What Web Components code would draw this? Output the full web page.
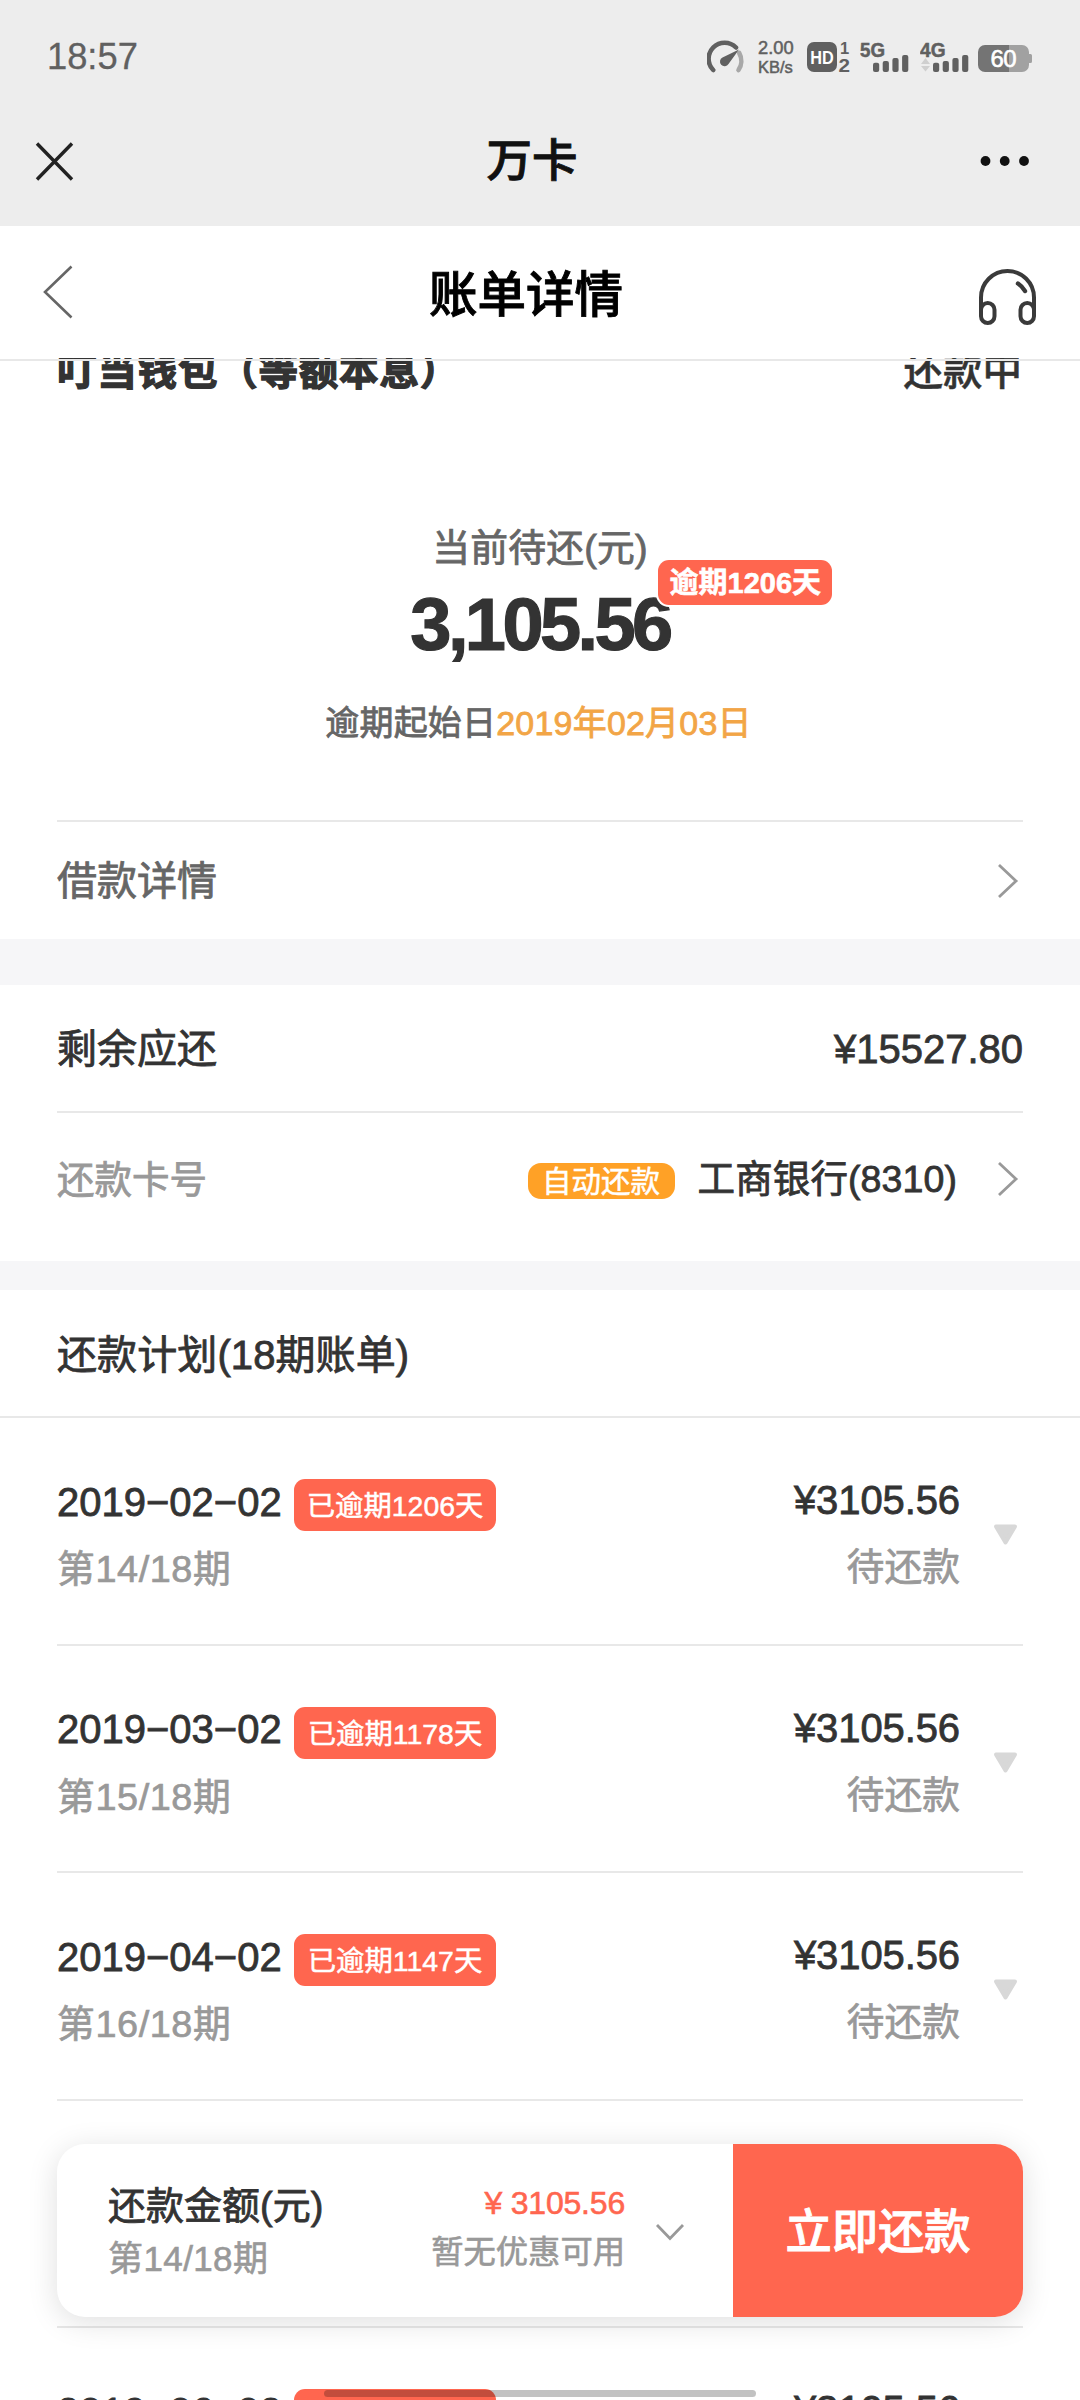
<!DOCTYPE html>
<html lang="zh-CN">
<head>
<meta charset="utf-8">
<title>账单详情</title>
<style>
html,body{margin:0;padding:0;background:#fff}
body{width:1080px;height:2400px;overflow:hidden;font-family:"Liberation Sans","Noto Sans CJK SC",sans-serif;color:#333}
</style>
</head>
<body>
<bill-app></bill-app>
<script>
const define=(name,css,html)=>{
  const tpl=document.createElement('template');
  tpl.innerHTML=`<style>*{box-sizing:border-box}${css}</style>${html}`;
  customElements.define(name,class extends HTMLElement{
    constructor(){
      super();
      this.attachShadow({mode:'open'}).append(tpl.content.cloneNode(true));
    }
  });
};
const bars=x=>[[0,62.7],[9.7,61],[19.4,58],[29.1,55]].map(([d,y])=>`<rect x="${x+d}" y="${y-36}" width="6.2" height="${72-y}" rx="2"/>`).join('');

define('status-bar',`
:host{display:flex;height:90px;padding:24px 47px 0 47px;justify-content:space-between;color:#606060}
time{font-size:36.3px;line-height:66px;-webkit-text-stroke:.3px}
.r{display:flex;height:48px;padding-top:12px}
.net{display:flex;flex-direction:column;width:35px;margin-left:14px;font-size:18.300px;line-height:19px;-webkit-text-stroke:.5px;white-space:nowrap;margin-top:2px}
.net b{font-weight:400;font-size:16.500px;line-height:20px}
svg{display:block;flex:none}
.hd{margin-left:14px}.s{margin-left:10px}.bat{margin-left:8px}
svg text{font-family:"Liberation Sans",sans-serif}
`,`
<time>18:57</time>
<div class="r">
<svg width="37" height="40" viewBox="0 0 37 40"><path d="M6.200 34A15.700 15.700 0 0 1 29 11.500" fill="none" stroke="#606060" stroke-width="4.600" stroke-linecap="round"/><path d="M32.200 17A16 16 0 0 1 31.500 34" fill="none" stroke="#a8a8a8" stroke-width="4.600" stroke-linecap="round"/><path d="M32 13.500L21.500 28A4.600 4.600 0 1 1 15.500 21.500Z" fill="#606060"/></svg>
<div class="net"><span>2.00</span><b>KB/s</b></div>
<svg class="hd" width="43" height="42" viewBox="0 0 43 42"><rect x="0" y="6" width="30" height="30" rx="7" fill="#606060"/><text x="3.300" y="28" font-size="19" font-weight="700" fill="#fff" textLength="23.500" lengthAdjust="spacingAndGlyphs">HD</text><text x="33" y="17.700" font-size="16.500" font-weight="700" fill="#606060">1</text><text x="31.500" y="36.300" font-size="18" font-weight="700" fill="#606060" textLength="11.500" lengthAdjust="spacingAndGlyphs">2</text></svg>
<svg class="s" width="50" height="42" viewBox="0 0 50 42" fill="#606060"><text x="0" y="20.500" font-size="20" font-weight="700" textLength="25" lengthAdjust="spacingAndGlyphs" stroke="#606060" stroke-width=".5">5G</text>${bars(13)}</svg>
<svg class="s" width="50" height="42" viewBox="0 0 50 42" fill="#606060"><text x="0" y="20.500" font-size="20" font-weight="700" textLength="25.500" lengthAdjust="spacingAndGlyphs" stroke="#606060" stroke-width=".5">4G</text><path d="M1 28L5.500 22L10 28ZM1 30L5.500 35.500L10 30Z" fill="#cfcfcf"/>${bars(13)}</svg>
<svg class="bat" width="55" height="42" viewBox="0 0 55 42"><path d="M7 9H31V36H7a7 7 0 0 1-7-7V16a7 7 0 0 1 7-7Z" fill="#747474"/><path d="M31 9H44a7 7 0 0 1 7 7V18h1.500q1.500 0 1.500 1.500V25.500q0 1.500-1.500 1.500H51V29a7 7 0 0 1-7 7H31Z" fill="#a1a1a1"/><text x="12.500" y="30.500" font-size="24" fill="#fff" stroke="#fff" stroke-width=".6" textLength="26">60</text></svg>
</div>`);

define('app-nav',`
:host{display:flex;height:136px;padding:0 50px 0 34px;align-items:center;justify-content:space-between}
h1{margin:8px 0 0 8px;font-size:45.500px;line-height:66px;font-weight:500;color:#111;-webkit-text-stroke:.9px}
svg{display:block;margin-top:6px}`,`
<svg width="42" height="42" viewBox="0 0 42 42" style="margin-top:8px"><path d="M3 2.500L38 38.500M38 2.500L3 38.500" stroke="#222" stroke-width="3.400"/></svg>
<h1>万卡</h1>
<svg width="50" height="12" viewBox="0 0 50 12" fill="#111"><circle cx="5.500" cy="6" r="4.900"/><circle cx="24.700" cy="6" r="4.900"/><circle cx="44" cy="6" r="4.900"/></svg>`);

define('page-header',`
:host{display:flex;height:132px;flex:none;padding:0 42px;align-items:center;justify-content:space-between;background:#fff}
h2{margin:5px 0 0 0;font-size:48.500px;line-height:70px;font-weight:500;color:#000;-webkit-text-stroke:.9px}
svg{display:block}`,`
<svg width="32" height="56" viewBox="0 0 32 56"><path d="M29.500 2.500L3 28L29.500 53.500" fill="none" stroke="#666" stroke-width="2.600"/></svg>
<h2>账单详情</h2>
<svg width="60" height="60" viewBox="0 0 60 60" style="margin-top:10px" fill="none" stroke="#3a3a3a" stroke-width="4"><path d="M3 49V30.500a26.500 26.500 0 0 1 53 0V49"/><rect x="3" y="36" width="13.500" height="20" rx="6.700"/><rect x="42.500" y="36" width="13.500" height="20" rx="6.700"/><path d="M40 16.500Q44.500 19.500 47 24" stroke-linecap="round" stroke-width="4.400"/></svg>`);

define('bill-head',`
:host{display:flex;height:62px;padding:0 57px;align-items:flex-start;justify-content:space-between;font-size:39.500px;line-height:60px}
b,span{display:block;margin-top:-17px}
b{font-weight:700;-webkit-text-stroke:1.300px;letter-spacing:.8px}
span{font-weight:500;-webkit-text-stroke:.5px;margin-right:1px}`,`<b>叮当钱包（等额本息）</b><span>还款中</span>`);

define('bill-hero',`
:host{display:flex;flex-direction:column;align-items:center;height:402px;color:#666;margin:0 57px;border-bottom:2px solid #e8e8e8;-webkit-text-stroke:.8px}
.l{font-size:37.800px;line-height:50px;margin-top:103px;letter-spacing:.2px}
.n{position:relative;font-size:74px;line-height:80px;font-weight:700;color:#333;letter-spacing:-3.600px;margin-top:12px;-webkit-text-stroke:1.200px}
.tag{position:absolute;left:248px;top:-25px;height:45px;width:174px;border-radius:11px;background:#ff664f;color:#fff;font-size:29px;line-height:47px;letter-spacing:0;text-align:center;white-space:nowrap;box-shadow:0 0 0 2px #fff;-webkit-text-stroke:.6px}
.d{font-size:34px;line-height:50px;margin:33px 0 0 -3px;letter-spacing:.2px}
.d em{font-style:normal;color:#f2a546}`,`
<div class="l">当前待还(元)</div>
<div class="n">3,105.56<span class="tag">逾期1206天</span></div>
<div class="d">逾期起始日<em>2019年02月03日</em></div>`);

define('section-gap',`:host{display:block;background:#f6f6f8;height:var(--h)}`,``);

define('info-row',`
:host{display:flex;align-items:center;height:var(--h);padding-top:var(--pt,0);margin:0 57px;box-sizing:border-box;font-size:40px;line-height:56px;border-bottom:var(--line,0) solid #e8e8e8;-webkit-text-stroke:.8px}
.v{display:flex;align-items:center;margin-left:auto}
svg{display:block;margin-left:40px;margin-right:4px}
:host(:not([arrow])) svg{display:none}`,`
<span><slot></slot></span><span class="v"><slot name="value"></slot></span>
<svg width="22" height="36" viewBox="0 0 22 36"><path d="M2 2L19 18L2 34" fill="none" stroke="#999" stroke-width="2.800"/></svg>`);

define('auto-tag',`:host{display:block;width:147px;height:36px;border-radius:13px;background:#ffa126;color:#fff;font-size:29.500px;line-height:38px;text-align:center;margin:4px 23px 0 0;-webkit-text-stroke:.5px}`,`<slot></slot>`);

define('plan-row',`
:host{display:flex;flex:none;box-sizing:border-box;height:227.500px;margin:0 57px;padding-right:5px;border-bottom:2px solid #e8e8e8}
.a{flex:1}
.t{display:flex;align-items:flex-start;height:53px;margin-top:60px}
.date{font-size:40px;line-height:52px;width:237px;margin-top:-2.500px;-webkit-text-stroke:.8px}
.badge{height:52px;width:202px;margin-top:1px;border-radius:11px;background:#ff664f;color:#fff;font-size:28.400px;line-height:54px;text-align:center;-webkit-text-stroke:.5px}
.s{font-size:37.800px;line-height:50px;color:#999;margin-top:13px;-webkit-text-stroke:.7px}
.a .s{letter-spacing:.6px}
.b{text-align:right;margin-top:56px}
.m{font-size:40px;line-height:52px;letter-spacing:-.1px;-webkit-text-stroke:.8px}
.b .s{margin-top:16px}
svg{display:block;margin:106px 0 0 33px}`,`
<div class="a"><div class="t"><span class="date"><slot name="date"></slot></span><span class="badge"><slot name="late"></slot></span></div><div class="s"><slot name="term"></slot></div></div>
<div class="b"><div class="m"><slot name="amount"></slot></div><div class="s"><slot name="state"></slot></div></div>
<svg width="25" height="22" viewBox="0 0 25 22"><path d="M3 2.500H22L12.500 18.500Z" fill="#d8d8d8" stroke="#d8d8d8" stroke-width="4" stroke-linejoin="round"/></svg>`);

define('pay-bar',`
:host{position:absolute;left:57px;top:2144px;width:966px;height:173px;display:flex;border-radius:28px;background:#fff;box-shadow:0 5px 30px rgba(0,0,0,.13);overflow:hidden}
.l{padding:37px 0 0 51px;-webkit-text-stroke:.8px}
.l div:first-child{font-size:38px;line-height:50px}
.l div+div{font-size:35px;line-height:50px;color:#999;letter-spacing:.4px;margin-top:3px;-webkit-text-stroke:.6px}
.m{margin-left:auto;text-align:right;padding-top:36px;color:#999;-webkit-text-stroke:.6px}
.p{font-size:32px;line-height:46px;color:#ff664f;letter-spacing:-.2px}
.c{font-size:32.300px;line-height:46px;margin-top:3px}
svg{display:block;margin:79px 48px 0 30px}
button{all:unset;width:290px;text-align:center;background:#ff664f;color:#fff;font-size:46.300px;line-height:176px;font-weight:500;-webkit-text-stroke:.9px}`,`
<div class="l"><div>还款金额(元)</div><div>第14/18期</div></div>
<div class="m"><div class="p">¥ 3105.56</div><div class="c">暂无优惠可用</div></div>
<svg width="30" height="19" viewBox="0 0 30 19"><path d="M2 2L15 15.500L28 2" fill="none" stroke="#999" stroke-width="2.800"/></svg>
<button>立即还款</button>`);

define('home-bar',`:host{position:absolute;left:324px;top:2390px;width:432px;height:7px;border-radius:4px;background:rgba(0,0,0,.24)}`,``);

define('bill-app',`
:host{display:flex;flex-direction:column;position:relative;width:1080px;height:2400px;overflow:hidden;background:#fff}
.top{background:#ededed;height:226px;flex:none}
main{position:relative;flex:1;overflow:hidden}
main::before{content:"";position:absolute;top:1px;left:0;right:0;height:2px;background:#e8e8e8}
h3{margin:0;height:128px;padding:3px 57px 0;border-bottom:2px solid #e8e8e8;font-size:40px;line-height:124px;font-weight:400;letter-spacing:.1px;-webkit-text-stroke:.8px}
.g{color:#666}.k{color:#999;font-size:37.500px}.bank{font-size:37.500px;letter-spacing:.1px}
.covered{display:block;height:225.500px;margin:0 57px;border-bottom:2px solid #e8e8e8;box-sizing:content-box}`,`
<div class="top"><status-bar></status-bar><app-nav></app-nav></div>
<page-header></page-header>
<main>
<bill-head></bill-head>
<bill-hero></bill-hero>
<info-row arrow style="--h:117px;--pt:1px"><span class="g">借款详情</span></info-row>
<section-gap style="--h:46px"></section-gap>
<info-row style="--h:128px;--line:2px;--pt:2px"><span>剩余应还</span><span slot="value">¥15527.80</span></info-row>
<info-row arrow style="--h:132px"><span class="k">还款卡号</span><auto-tag slot="value">自动还款</auto-tag><span slot="value" class="bank">工商银行(8310)</span></info-row>
<section-gap style="--h:29px;margin-top:16px"></section-gap>
<h3>还款计划(18期账单)</h3>
<plan-row><span slot="date">2019−02−02</span><span slot="late">已逾期1206天</span><span slot="term">第14/18期</span><span slot="amount">¥3105.56</span><span slot="state">待还款</span></plan-row>
<plan-row><span slot="date">2019−03−02</span><span slot="late">已逾期1178天</span><span slot="term">第15/18期</span><span slot="amount">¥3105.56</span><span slot="state">待还款</span></plan-row>
<plan-row><span slot="date">2019−04−02</span><span slot="late">已逾期1147天</span><span slot="term">第16/18期</span><span slot="amount">¥3105.56</span><span slot="state">待还款</span></plan-row>
<div class="covered"></div>
<plan-row><span slot="date">2019−06−02</span><span slot="amount">¥3105.56</span></plan-row>
</main>
<pay-bar></pay-bar>
<home-bar></home-bar>`);
</script>
</body>
</html>
